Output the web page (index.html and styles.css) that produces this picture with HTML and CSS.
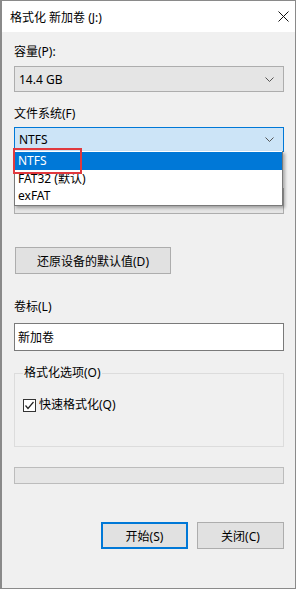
FILE: index.html
```html
<!DOCTYPE html>
<html lang="zh-CN">
<head>
    <meta charset="UTF-8">
    <meta name="viewport" content="width=device-width, initial-scale=1.0">
    <title>格式化 新加卷 (J:)</title>
    <link rel="stylesheet" href="styles.css">
</head>
<body>
    <div class="window">
        <div class="titlebar">
            <span class="title">格式化 新加卷 (J:)</span>
            <svg class="close" width="11" height="11" viewBox="0 0 11 11">
                <path d="M0.5 0.5 L10.5 10.5 M10.5 0.5 L0.5 10.5" stroke="#111" stroke-width="1" fill="none"/>
            </svg>
        </div>

        <div class="content">
            <div class="label first">容量(P):</div>
            <div class="combo">
                <span>14.4 GB</span>
                <svg class="arrow" width="9" height="5" viewBox="0 0 9 5"><path d="M0.5 0.5 L4.5 4.5 L8.5 0.5" stroke="#555" fill="none"/></svg>
            </div>

            <div class="label">文件系统(F)</div>
            <div class="combo-wrap">
                <div class="combo active">
                    <span>NTFS</span>
                    <svg class="arrow" width="9" height="5" viewBox="0 0 9 5"><path d="M0.5 0.5 L4.5 4.5 L8.5 0.5" stroke="#555" fill="none"/></svg>
                </div>
                <ul class="dropdown">
                    <li class="selected">NTFS</li>
                    <li>FAT32 (默认)</li>
                    <li>exFAT</li>
                </ul>
                <div class="highlight"></div>
            </div>

            <!-- allocation size row, covered by the open list -->
            <div class="label under"></div>
            <div class="combo"></div>

            <button class="btn restore">还原设备的默认值(D)</button>

            <div class="label volume">卷标(L)</div>
            <div class="textbox">新加卷</div>

            <fieldset class="options">
                <legend>格式化选项(O)</legend>
                <div class="check-row">
                    <span class="checkbox">
                        <svg width="11" height="11" viewBox="0 0 11 11"><path d="M1.5 5.5 L4 8.5 L9.5 2" stroke="#222" stroke-width="1.2" fill="none"/></svg>
                    </span>
                    <span>快速格式化(Q)</span>
                </div>
            </fieldset>

            <div class="progress"></div>

            <div class="actions">
                <button class="btn default">开始(S)</button>
                <button class="btn">关闭(C)</button>
            </div>
        </div>
    </div>
</body>
</html>
```

FILE: styles.css
```css
body {
    margin: 0;
    background-color: #ffffff;
    font-family: "Noto Sans", "Noto Sans CJK SC", sans-serif;
    font-size: 12px;
    color: #000;
}
.window {
    width: 293px;
    height: 587px;
    border: 1px solid #8a8a8a;
    border-left-width: 2px;
    background-color: #f0f0f0;
    display: flex;
    flex-direction: column;
}
.titlebar {
    height: 31px;
    background-color: #ffffff;
    display: flex;
    align-items: center;
    justify-content: space-between;
    padding: 0 6px 0 8px;
}
.title {
    font-size: 12px;
}
.close {
    margin-top: -1px;
}
.content {
    padding: 0 11px 0 12px;
    display: flex;
    flex-direction: column;
}
.label {
    line-height: 16px;
    min-height: 16px;
    margin-top: 14px;
}
.label.first {
    margin-top: 12px;
}
.label.under {
    margin-top: 14px;
}
.label.volume {
    margin-top: 25px;
}
.combo {
    margin-top: 6px;
    height: 24px;
    border: 1px solid #adadad;
    background-color: #e5e5e5;
    display: flex;
    align-items: center;
    justify-content: space-between;
    padding: 0 9px 0 4px;
}
.combo.active {
    margin-top: 5px;
    background-color: #cce4f7;
    border-color: #0078d7;
    height: 23px;
}
.combo-wrap {
    position: relative;
}
.dropdown {
    position: absolute;
    top: 29px;
    left: 0;
    width: 267px;
    margin: 0;
    padding: 1px 0;
    list-style: none;
    background-color: #ffffff;
    border: 1px solid #7a7a7a;
    border-top: none;
    box-shadow: 2px 2px 3px rgba(0, 0, 0, 0.3);
    z-index: 2;
}
.dropdown li {
    height: 17px;
    line-height: 17px;
    padding-left: 3px;
}
.dropdown li.selected {
    background-color: #0078d7;
    color: #ffffff;
    height: 18px;
    line-height: 18px;
}
.highlight {
    position: absolute;
    top: 26px;
    left: -1px;
    width: 65px;
    height: 22px;
    border: 2px solid #e0393e;
    z-index: 3;
}
.btn {
    font-family: inherit;
    font-size: 12px;
    color: #000;
    background-color: #e1e1e1;
    border: 1px solid #adadad;
    height: 27px;
    padding: 0;
    margin: 0;
}
.restore {
    margin-top: 33px;
    margin-left: 1px;
    width: 156px;
}
.textbox {
    margin-top: 8px;
    height: 26px;
    border: 1px solid #7a7a7a;
    background-color: #ffffff;
    display: flex;
    align-items: center;
    padding-left: 3px;
}
.options {
    margin: 14px 0 0 0;
    padding: 0 8px 33px 8px;
    border: 1px solid #dcdcdc;
}
.options legend {
    padding: 0 1px;
    line-height: 16px;
}
.check-row {
    margin-top: 16px;
    display: flex;
    align-items: center;
    gap: 3px;
    line-height: 16px;
}
.checkbox {
    width: 11px;
    height: 11px;
    border: 1px solid #333;
    background-color: #ffffff;
    display: flex;
}
.progress {
    margin-top: 20px;
    height: 15px;
    border: 1px solid #bcbcbc;
    background-color: #e6e6e6;
}
.actions {
    margin-top: 38px;
    display: flex;
    justify-content: flex-end;
    gap: 9px;
}
.actions .btn {
    width: 87px;
}
.btn.default {
    border: 2px solid #0078d7;
}
```
